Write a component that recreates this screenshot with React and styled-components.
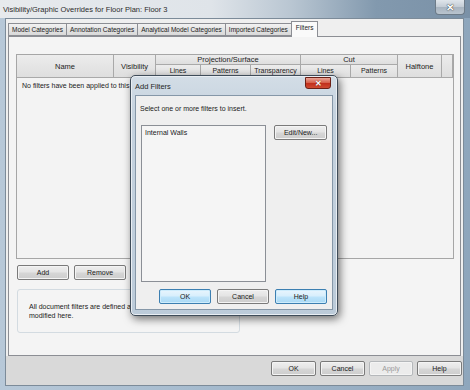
import styled, {createGlobalStyle} from 'styled-components';

const GlobalStyle = createGlobalStyle`
    html, body {
        margin: 0;
        padding: 0;
        background: #8fa6bb;
    }
    body {
        font-family: "Liberation Sans", Arial, sans-serif;
        color: #1a1a1a;
    }
`;

const Window = styled.div`
    position: relative;
    width: 470px;
    height: 390px;
    overflow: hidden;
    display: flex;
    flex-direction: column;
    background: linear-gradient(90deg, #b7c8d8 0%, #a7bccf 40%, #8ea6bc 100%);
`;

const TitleBar = styled.div`
    height: 18px;
    flex-shrink: 0;
    display: flex;
    align-items: center;
    justify-content: space-between;
    padding-left: 3px;
    background: linear-gradient(90deg, #e7eaed 0%, #dfe4e9 45%, #b9c6d2 62%, #8299ae 80%, #7a91a7 100%);
`;

const Title = styled.div`
    font-size: 7.5px;
    color: #2b2b2b;
    white-space: nowrap;
`;

const WinClose = styled.div`
    align-self: flex-start;
    width: 28px;
    height: 14px;
    margin-right: 5px;
    display: flex;
    align-items: center;
    justify-content: center;
    border: 1px solid #6d7b88;
    border-top: none;
    border-radius: 0 0 4px 4px;
    background: linear-gradient(180deg, #dfe5eb 0%, #c3ccd5 50%, #a8b4c0 51%, #b9c4ce 100%);
    color: #fff;
    font-size: 10px;
    font-weight: bold;
    text-shadow: 0 0 1px #333, 0 0 1px #333;
`;

const Client = styled.div`
    flex: 1;
    margin: 0 6px 4px 5px;
    padding: 2px 1px 0 2px;
    display: flex;
    flex-direction: column;
    background: #efefef;
    border: 1px solid #7c8b99;
`;

const TabStrip = styled.div`
    display: flex;
    align-items: flex-end;
    height: 15px;
    padding-left: 0;
    position: relative;
    z-index: 1;
`;

const Tab = styled.div`
    height: ${p => (p.$active ? '16px' : '13px')};
    margin-bottom: ${p => (p.$active ? '-1px' : '0')};
    padding: 0 ${p => (p.$active ? '4px' : '3px')};
    display: flex;
    align-items: ${p => (p.$active ? 'flex-start' : 'center')};
    padding-top: ${p => (p.$active ? '2px' : '0')};
    box-sizing: border-box;
    font-size: 6.5px;
    white-space: nowrap;
    border: 1px solid #8c8e94;
    border-bottom: ${p => (p.$active ? 'none' : '1px solid #8c8e94')};
    margin-right: -1px;
    background: ${p => (p.$active ? '#fafafa' : 'linear-gradient(180deg, #f2f2f2 0%, #e3e3e3 50%, #d9d9d9 100%)')};
`;

const TabPanel = styled.div`
    flex: 1;
    display: flex;
    flex-direction: column;
    padding: 17px 7px 0 7px;
    background: #f4f4f4;
    border: 1px solid #8c8e94;
    margin-right: 1px;
`;

const Table = styled.div`
    height: 205px;
    width: 438px;
    box-sizing: border-box;
    border: 1px solid #a6a6a6;
    background: #f3f3f3;
    display: flex;
    flex-direction: column;
`;

const HeaderGrid = styled.div`
    display: grid;
    grid-template-columns: 97px 42px 45px 50px 50px 50px 47px 44px 1fr;
    grid-template-rows: 10px 13px;
`;

const HeadCell = styled.div`
    grid-column: ${p => p.$col};
    grid-row: ${p => p.$row};
    display: flex;
    align-items: ${p => (p.$small ? 'flex-start' : 'center')};
    padding-top: ${p => (p.$small ? '2px' : '0')};
    justify-content: center;
    overflow: hidden;
    white-space: nowrap;
    font-size: ${p => (p.$small ? '7px' : '7.5px')};
    color: #222;
    border-right: 1px solid #a9a9a9;
    border-bottom: 1px solid #a9a9a9;
    background: linear-gradient(180deg, #ececec 0%, #dedede 100%);
`;

const EmptyNote = styled.div`
    padding: 4px 0 0 5px;
    font-size: 7px;
    white-space: nowrap;
`;

const ButtonRow = styled.div`
    display: flex;
    gap: ${p => p.$gap || 5}px;
    justify-content: ${p => (p.$end ? 'flex-end' : 'flex-start')};
    margin-top: ${p => p.$top || 0}px;
    padding-left: ${p => p.$left || 0}px;
`;

const Button = styled.div`
    width: ${p => p.$w || 52}px;
    height: 15px;
    box-sizing: border-box;
    display: flex;
    align-items: center;
    justify-content: center;
    font-size: 7px;
    color: ${p => (p.$disabled ? '#9a9a9a' : '#1a1a1a')};
    border: 1px solid ${p => (p.$blue ? '#3c7fb1' : p.$disabled ? '#b5b8bb' : '#7a7a7a')};
    border-radius: 2px;
    box-shadow: inset 0 0 0 1px ${p => (p.$blue ? '#cdecfc' : '#f4f4f4')};
    background: ${p =>
        p.$blue
            ? 'linear-gradient(180deg, #e8f5fd 0%, #d7eefc 48%, #bde4fb 52%, #a8d8f4 100%)'
            : p.$disabled
            ? '#ececec'
            : 'linear-gradient(180deg, #eeeeee 0%, #e4e4e4 48%, #d6d6d6 52%, #cdcdcd 100%)'};
`;

const InfoBox = styled.div`
    margin-top: 9px;
    margin-left: 1px;
    width: 223px;
    height: 44px;
    box-sizing: border-box;
    padding: 12px 0 0 11px;
    border: 1px solid #d3dbe1;
    border-radius: 3px;
    font-size: 7px;
    line-height: 9px;
`;

const BottomBar = styled.div`
    height: 24px;
    flex-shrink: 0;
    display: flex;
    align-items: flex-start;
    justify-content: flex-end;
    gap: 4px;
    padding: 5px 1px 0 0;
    margin: 0 -1px 0 -2px;
    background: #d9d9d9;
`;

/* Add Filters dialog, floating over the main window */
const Dialog = styled.div`
    position: absolute;
    left: 130px;
    top: 75px;
    width: 208px;
    height: 241px;
    box-sizing: border-box;
    display: flex;
    flex-direction: column;
    border: 1px solid #3f4c59;
    border-radius: 5px;
    background: linear-gradient(180deg, #d3dde6 0%, #c6d3df 15%, #bccbd9 100%);
    box-shadow: 2px 3px 9px rgba(0, 0, 0, 0.55), inset 0 0 0 1px #e9eef3;
`;

const DialogTitleBar = styled.div`
    height: 19px;
    flex-shrink: 0;
    display: flex;
    align-items: center;
    justify-content: space-between;
    padding-left: 4px;
`;

const DialogTitle = styled.div`
    font-size: 7.5px;
    color: #1f1f1f;
    margin-top: 1px;
`;

const RedClose = styled.div`
    align-self: flex-start;
    width: 26px;
    height: 12px;
    margin: 1px 6px 0 0;
    box-sizing: border-box;
    display: flex;
    align-items: center;
    justify-content: center;
    border: 1px solid #6b2016;
    border-radius: 0 0 3px 3px;
    background: linear-gradient(180deg, #e9a597 0%, #d7634e 45%, #c2301c 55%, #cf4a31 100%);
    color: #fff;
    font-size: 8px;
    font-weight: bold;
    text-shadow: 0 0 1px #5a1308;
`;

const DialogClient = styled.div`
    flex: 1;
    margin: 0 4px 6px 4px;
    padding: 8px 5px 5px 4px;
    display: flex;
    flex-direction: column;
    background: #efefef;
    border: 1px solid #8597a8;
`;

const Prompt = styled.div`
    font-size: 7px;
    line-height: 9px;
    white-space: nowrap;
`;

const DialogBody = styled.div`
    display: flex;
    gap: 8px;
    margin-top: 12px;
    padding-left: 1px;
`;

const ListBox = styled.div`
    width: 126px;
    height: 157px;
    box-sizing: border-box;
    padding: 3px 3px;
    font-size: 7px;
    background: #f5f5f5;
    border: 1px solid #8b8f96;
`;

export default function App() {
    return (
        <>
            <GlobalStyle />
            <Window>
                <TitleBar>
                    <Title>Visibility/Graphic Overrides for Floor Plan: Floor 3</Title>
                    <WinClose>✕</WinClose>
                </TitleBar>
                <Client>
                    <TabStrip>
                        <Tab>Model Categories</Tab>
                        <Tab>Annotation Categories</Tab>
                        <Tab>Analytical Model Categories</Tab>
                        <Tab>Imported Categories</Tab>
                        <Tab $active>Filters</Tab>
                    </TabStrip>
                    <TabPanel>
                        <Table>
                            <HeaderGrid>
                                <HeadCell $col="1" $row="1 / 3">Name</HeadCell>
                                <HeadCell $col="2" $row="1 / 3">Visibility</HeadCell>
                                <HeadCell $col="3 / 6" $row="1">Projection/Surface</HeadCell>
                                <HeadCell $col="3" $row="2" $small>Lines</HeadCell>
                                <HeadCell $col="4" $row="2" $small>Patterns</HeadCell>
                                <HeadCell $col="5" $row="2" $small>Transparency</HeadCell>
                                <HeadCell $col="6 / 8" $row="1">Cut</HeadCell>
                                <HeadCell $col="6" $row="2" $small>Lines</HeadCell>
                                <HeadCell $col="7" $row="2" $small>Patterns</HeadCell>
                                <HeadCell $col="8" $row="1 / 3">Halftone</HeadCell>
                                <HeadCell $col="9" $row="1 / 3" />
                            </HeaderGrid>
                            <EmptyNote>No filters have been applied to this view.</EmptyNote>
                        </Table>
                        <ButtonRow $top={6} $left={1}>
                            <Button>Add</Button>
                            <Button>Remove</Button>
                        </ButtonRow>
                        <InfoBox>
                            All document filters are defined and<br />
                            modified here.
                        </InfoBox>
                    </TabPanel>
                    <BottomBar>
                        <Button $w={45}>OK</Button>
                        <Button $w={45}>Cancel</Button>
                        <Button $w={44} $disabled>Apply</Button>
                        <Button $w={45}>Help</Button>
                    </BottomBar>
                </Client>

                <Dialog>
                    <DialogTitleBar>
                        <DialogTitle>Add Filters</DialogTitle>
                        <RedClose>✕</RedClose>
                    </DialogTitleBar>
                    <DialogClient>
                        <Prompt>Select one or more filters to insert.</Prompt>
                        <DialogBody>
                            <ListBox>Internal Walls</ListBox>
                            <Button $w={53}>Edit/New...</Button>
                        </DialogBody>
                        <ButtonRow $end $top={7} $gap={6}>
                            <Button $blue>OK</Button>
                            <Button>Cancel</Button>
                            <Button $blue>Help</Button>
                        </ButtonRow>
                    </DialogClient>
                </Dialog>
            </Window>
        </>
    );
}
